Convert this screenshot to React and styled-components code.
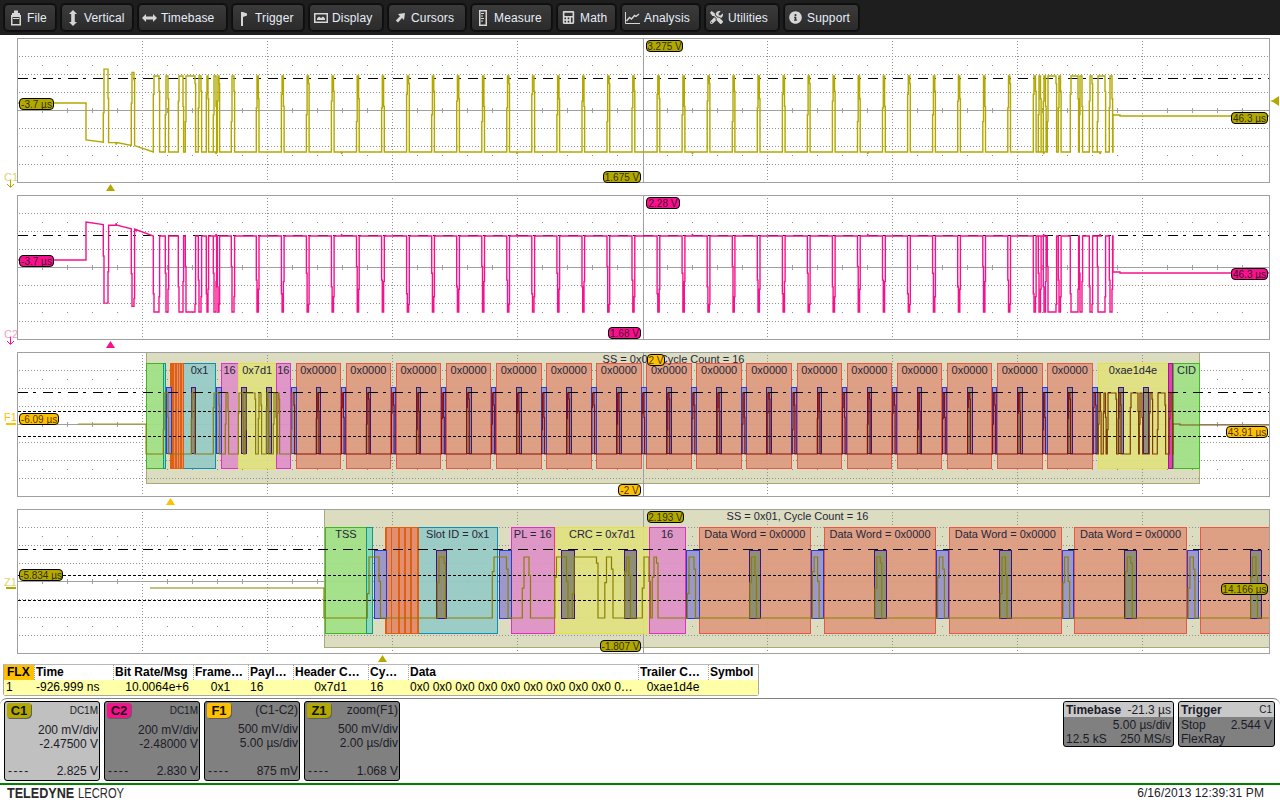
import React from 'react'
import styled, { createGlobalStyle } from 'styled-components'
import { FaCalculator, FaInfoCircle, FaTools } from 'react-icons/fa'

const GlobalStyle = createGlobalStyle`
  html, body {
    margin: 0;
    padding: 0;
    background: #fff;
  }
  body {
    font-family: "Liberation Sans", Arial, sans-serif;
  }
`

const Page = styled.div`
  width: 1280px;
  height: 800px;
  overflow: hidden;
  display: flex;
  flex-direction: column;
  background: #fff;
`

// top menu
const Toolbar = styled.div`
  height: 35px;
  flex: none;
  background: #1e1e1e;
  display: flex;
  align-items: flex-start;
  gap: 5px;
  padding: 4px 0 0 4px;
  box-sizing: border-box;
`
const MenuButton = styled.div`
  width: ${p => p.$w}px;
  height: 27px;
  flex: none;
  box-sizing: border-box;
  display: flex;
  align-items: center;
  padding-left: 3px;
  background: linear-gradient(#3b3b3b, #2b2b2b);
  border: 1px solid #0d0d0d;
  border-radius: 4px;
  box-shadow: 0 0 0 1px #111;
  color: #e6eefa;
  font-size: 12px;
  letter-spacing: 0.15px;
`
const MenuIcon = styled.span`
  width: 15px;
  height: 16px;
  margin-right: 4px;
  flex: none;
  display: flex;
  align-items: center;
  justify-content: center;
  color: #d6d6d6;
  font-size: 13px;
`

const Glyph = ({ children }) => (
  <svg width="14" height="16" viewBox="0 0 14 16" fill="#d6d6d6">{children}</svg>
)

const menu = [
  { label: 'File', w: 52, icon: <Glyph><rect x="3" y="3" width="8" height="2" /><rect x="5" y="0.5" width="4" height="3" /><path fillRule="evenodd" d="M2 5h10v10.5H2zM3.5 7v7h7V7z" /><rect x="4" y="8" width="6" height="1" /></Glyph> },
  { label: 'Vertical', w: 72, icon: <Glyph><path d="M7 0l4 4H8.8v8H11l-4 4-4-4h2.2V4H3z" /></Glyph> },
  { label: 'Timebase', w: 89, icon: <svg width="15" height="10" viewBox="0 0 15 10" fill="#d6d6d6"><path d="M0 5l4-4v2.6h7V1l4 4-4 4V6.4H4V9z" /></svg> },
  { label: 'Trigger', w: 72, icon: <Glyph><rect x="4" y="2" width="2" height="14" /><path d="M6 2l4 1.5v2L6 7z" /></Glyph> },
  { label: 'Display', w: 74, icon: <Glyph><path fillRule="evenodd" d="M0 3h14v10H0zM1.5 4.5v7h11v-7z" /><path d="M3 10V8.5l2-2 2 1.5 2-1.5 2 2V10z" /></Glyph> },
  { label: 'Cursors', w: 78, icon: <Glyph><path d="M12 3L11 10 9 8l-4 4.4L2.8 10.4 7 6.2 5 4z" /></Glyph> },
  { label: 'Measure', w: 81, icon: <Glyph><path fillRule="evenodd" d="M3 0h8v16H3zM4.5 1.5v13h5v-13z" /><path d="M5 3h3v1H5zM5 5.5h2v1H5zM5 8h3v1H5zM5 10.5h2v1H5z" /></Glyph> },
  { label: 'Math', w: 59, icon: <FaCalculator /> },
  { label: 'Analysis', w: 79, icon: <svg width="15" height="14" viewBox="0 0 15 14" fill="none" stroke="#d6d6d6"><path d="M0.5 1v11.5H15" /><path d="M1.5 10l3-3.5 2 1.5 3-3.5 1.5 1L14 3" strokeWidth="1.4" /></svg> },
  { label: 'Utilities', w: 74, icon: <FaTools /> },
  { label: 'Support', w: 75, icon: <FaInfoCircle /> },
]

// scope grids
const Grids = styled.div`
  display: flex;
  flex-direction: column;
  gap: 12px;
  padding: 3px 0 0 17px;
  flex: none;
`
const GridRow = styled.div`
  position: relative;
  width: 1253px;
  height: 145px;
  &::after {
    content: "";
    position: absolute;
    inset: 0;
    border: 1px solid #a0a0a0;
    pointer-events: none;
  }
`
const GridSvg = styled.svg`
  display: block;
  width: 1253px;
  height: 145px;
  overflow: hidden;
`
const Pill = styled.span`
  position: absolute;
  left: ${p => p.$x - 17}px;
  top: ${p => p.$y - p.$top}px;
  width: ${p => p.$w}px;
  height: 10px;
  display: flex;
  align-items: center;
  justify-content: center;
  background: ${p => p.$bg};
  border: 1px solid #000;
  border-radius: 4px;
  font-size: 10px;
  color: rgba(0, 0, 0, 0.75);
  white-space: nowrap;
  z-index: 2;
`
const TraceName = styled.span`
  position: absolute;
  left: -13px;
  top: ${p => p.$y}px;
  font-size: 11px;
  color: ${p => p.$color};
  line-height: 12px;
`
const NameMark = styled.svg`
  position: absolute;
  left: -11px;
  top: ${p => p.$y}px;
`
const Marker = styled.svg`
  position: absolute;
  left: ${p => p.$x - 17 - 4}px;
  top: 146px;
`
const LevelArrow = styled.svg`
  position: absolute;
  left: 1253px;
  top: 58px;
`

const early = [
  [104, 108], [132, 134], [154, 159], [166, 168], [179, 183], [186, 195],
  [199, 201], [207, 208], [214, 216], [218, 219], [232, 234],
]
const regular = Array.from({ length: 31 }, (_, i) => [257 + 25.05 * i, 258.4 + 25.05 * i])
const late = [
  [1034, 1035.5], [1039, 1040.5], [1044, 1045.5], [1048, 1056], [1059, 1060.5],
  [1071, 1078], [1080, 1082], [1090, 1092], [1098, 1105], [1110, 1112],
]
const pulses = [...early, ...regular, ...late]

const lerp = (a, b, t) => a + (b - a) * t
const fall = x => Math.min(1, Math.max(0, (x - 86) / 68))

// builds the d attribute for one trace, x values come in C1 time
function tracePath({ map, startX, pre, post, endX, base, peak, spikes }) {
  const pts = [[startX, pre], [map(86), pre], [map(86), base(86)]]
  pulses.forEach(([s, e], i) => {
    const b = base(s)
    const p = peak(s)
    const up = 0.4 + ((i * 7) % 5) * 0.09
    const down = 0.6 + ((i * 3) % 4) * 0.1
    pts.push([map(s - 0.7), b], [map(s - 0.7), lerp(b, p, up)], [map(s), lerp(b, p, up)], [map(s), p], [map(e), p])
    pts.push([map(e), lerp(b, p, down)], [map(e + 0.6), lerp(b, p, down)], [map(e + 0.6), base(e)])
    if (spikes && i % 7 === 0) {
      const sx = map(e + 8)
      pts.push([sx, base(e)], [sx, base(e) + 2 * (b < p ? -1 : 1)], [sx + 1, base(e)])
    }
  })
  pts.push([map(1113), base(1113)], [map(1113), post - 1], [map(1120), post - 1], [map(1120), post], [endX, post])
  return 'M' + pts.map(p => `${p[0].toFixed(1)} ${p[1].toFixed(1)}`).join('L')
}

const frames = [
  { f: 146.5, t: 163, fill: '#9fdf85', line: '#40b820', long: 'TSS' },
  { f: 163, t: 165.5, fill: '#7fd8b8', line: '#109a80' },
  { f: 183.5, t: 215.5, fill: '#95cac5', line: '#0c90b8', short: '0x1', long: 'Slot ID = 0x1' },
  { f: 221, t: 238, fill: '#dd90c8', line: '#e030c8', short: '16', long: 'PL = 16' },
  { f: 238.5, t: 276, fill: '#dfdf80', line: '#e4e040', short: '0x7d1', long: 'CRC = 0x7d1' },
  { f: 276, t: 290.5, fill: '#dd90c8', line: '#e030c8', short: '16', long: '16' },
  ...Array.from({ length: 16 }, (_, i) => ({
    f: 296 + 50.1 * i,
    t: 340.6 + 50.1 * i,
    fill: '#dd9a80',
    line: '#e85848',
    short: '0x0000',
    long: 'Data Word = 0x0000',
  })),
  { f: 1098, t: 1168, fill: '#dfdf80', line: '#e4e040', short: '0xae1d4e' },
  { f: 1168, t: 1172.5, fill: '#d838b0', line: '#b01090' },
  { f: 1173.5, t: 1199.5, fill: '#9fdf85', line: '#40b820', short: 'CID' },
]
const bars = [
  { f: 166, t: 171, blue: true },
  { f: 191, t: 195 },
  { f: 216, t: 221, blue: true },
  { f: 241, t: 246 },
  { f: 266, t: 271 },
  { f: 291, t: 296, blue: true },
  ...Array.from({ length: 16 }, (_, i) => ({ f: 316 + 50.1 * i, t: 320.7 + 50.1 * i })),
  ...Array.from({ length: 16 }, (_, i) => ({ f: 341 + 50.1 * i, t: 345.6 + 50.1 * i, blue: true })),
  { f: 1118, t: 1123 },
  { f: 1143, t: 1148 },
]
const orangeLines = [170.8, 173, 176, 178.4, 180.7, 183.5]

function Grid({ top }) {
  const verticals = Array.from({ length: 9 }, (_, i) => 142.5 + 125 * i).filter(x => x !== 642.5)
  const levels = [18, 36, 54, 90, 108, 126]
  const ticks = Array.from({ length: 49 }, (_, i) => 42 + 25 * i).filter(x => (x - 17) % 125 !== 0)
  return (
    <g shapeRendering="crispEdges">
      {verticals.map(x => <line key={x} x1={x} x2={x} y1={top} y2={top + 144} stroke="#909090" strokeDasharray="1 2" />)}
      {levels.map(y => <line key={y} x1={19} x2={1268} y1={top + y + 0.5} y2={top + y + 0.5} stroke="#909090" strokeDasharray="1 2" />)}
      {ticks.map(x => (
        <g key={x}>
          <rect x={x} y={top + 27} width="1" height="1" fill="#8c8c8c" />
          <rect x={x} y={top + 117} width="1" height="1" fill="#8c8c8c" />
          <rect x={x} y={top + 70} width="1" height="5" fill="#a0a0a0" />
        </g>
      ))}
      <line x1={17} x2={1270} y1={top + 72.5} y2={top + 72.5} stroke="#a0a0a0" />
      <line x1={643} x2={643} y1={top} y2={top + 145} stroke="#a0a0a0" />
    </g>
  )
}

const ThresholdLine = ({ y, dot }) => (
  <line x1={18} x2={1269} y1={y + 0.5} y2={y + 0.5} stroke="#000" strokeDasharray={dot ? '10 5 3 7' : '3 2'} shapeRendering="crispEdges" />
)

function Decode({ map, boxTop, boxBottom, barTop, barBottom, labelY, field }) {
  return (
    <g>
      <g shapeRendering="crispEdges">
        {frames.map(b => (
          <rect key={b.f} x={map(b.f)} y={boxTop} width={map(b.t) - map(b.f)} height={boxBottom - boxTop} fill={b.fill} fillOpacity="0.92" stroke={b.line} />
        ))}
        <rect x={map(170.8)} y={boxTop} width={map(183.5) - map(170.8)} height={boxBottom - boxTop} fill="#e09070" stroke="#e06010" />
        {orangeLines.map(x => <line key={x} x1={map(x)} x2={map(x)} y1={boxTop} y2={boxBottom} stroke="#e06010" strokeWidth="1.6" />)}
        {bars.map(b => (
          <rect key={b.f} x={map(b.f)} y={barTop} width={map(b.t) - map(b.f)} height={barBottom - barTop} fill={b.blue ? '#9c98cc' : '#8f8f78'} stroke={b.blue ? '#2c3cc8' : '#40108c'} />
        ))}
      </g>
      {frames.filter(b => b[field] && map(b.t) < 1270).map(b => (
        <text key={b.f} x={(map(b.f) + map(b.t)) / 2} y={labelY} textAnchor="middle" fontSize="11" fill="#26263a" fontFamily="Liberation Sans, Arial, sans-serif">{b[field]}</text>
      ))}
    </g>
  )
}

const fMap = c => c + 60
const zMap = c => 324 + (c - 86) * 2.5
const fIdentity = f => f
const zFromF = f => 324 + (f - 146) * 2.5

const C1_COLOR = '#b2a800'
const C2_COLOR = '#f5128c'
const F1_COLOR = '#ffc000'

const c1Path = tracePath({
  map: x => x, startX: 18, pre: 103, post: 116, endX: 1269, spikes: true,
  base: x => (x < 154 ? lerp(140, 148, fall(x)) : 152),
  peak: x => (x < 154 ? lerp(67, 75, fall(x)) : 76),
})
const c2Path = tracePath({
  map: x => x, startX: 18, pre: 260, post: 273, endX: 1269, spikes: true,
  base: x => (x < 154 ? lerp(222, 232, fall(x)) : 236),
  peak: x => (x < 154 ? lerp(301, 309, fall(x)) : 312),
})
const f1Path = tracePath({
  map: fMap, startX: 78, pre: 424, post: 425, endX: 1269,
  base: () => 454, peak: () => 393,
})
const z1Path = tracePath({
  map: zMap, startX: 150, pre: 588, post: 589, endX: 1269,
  base: () => 618, peak: () => 557,
})

// results table
const columns = '30px 79px 80px 55px 45px 75px 40px 230px 70px 51px'
const Table = styled.div`
  margin: 10px 0 0 3px;
  width: 756px;
  height: 32px;
  flex: none;
  box-sizing: border-box;
  border: 1px solid #a8a8a8;
  border-top-color: #b8b8b8;
  border-radius: 0 0 3px 3px;
  font-size: 12px;
  color: #000;
`
const TableRow = styled.div`
  display: grid;
  grid-template-columns: ${columns};
  height: 15px;
  line-height: 15px;
  background: ${p => (p.$head ? '#fff' : '#ffffa8')};
`
const HeadCell = styled.div`
  padding-left: 1px;
  border-left: ${p => (p.$first ? 'none' : '1px dotted #a0a0a0')};
  background: ${p => (p.$first ? '#ffc000' : 'transparent')};
  overflow: hidden;
  white-space: nowrap;
  font-weight: 700;
  text-indent: ${p => (p.$first ? 2 : 0)}px;
`
const ValueCell = styled.div`
  padding: 0 ${p => (p.$align === 'right' ? 4 : 2)}px 0 2px;
  text-align: ${p => p.$align || 'left'};
  white-space: nowrap;
  overflow: hidden;
`

// lower descriptor area
const Dock = styled.div`
  height: 85px;
  margin-top: 2px;
  flex: none;
  box-sizing: border-box;
  border-top: 1px solid #808080;
  border-radius: 7px 7px 0 0;
  padding: 2px 5px 0 4px;
  display: flex;
  align-items: flex-start;
  justify-content: space-between;
`
const ChannelGroup = styled.div`
  display: flex;
  gap: 4px;
`
const ChannelCard = styled.div`
  width: 96px;
  height: 80px;
  box-sizing: border-box;
  background: ${p => (p.$active ? '#c0c0c0' : '#808080')};
  border: 1px solid #000;
  border-radius: 3px;
  padding: 0 1px 2px 0;
  color: #1c1c28;
  font-size: 12px;
  line-height: 14px;
  display: flex;
  flex-direction: column;
  text-align: right;
`
const CardTop = styled.div`
  display: flex;
  justify-content: space-between;
  align-items: flex-start;
  height: 18px;
  padding-top: ${p => (p.$small ? 2 : 1)}px;
  margin-bottom: 1px;
  box-sizing: content-box;
  font-size: ${p => (p.$small ? 10 : 12)}px;
`
const ChannelTag = styled.span`
  width: 24px;
  height: 15px;
  margin: ${p => (p.$small ? -1 : 0)}px 0 0 2px;
  background: ${p => p.$color};
  border-radius: 2px 2px 5px 2px;
  box-shadow: 1px 1px 0 #606060;
  color: #111;
  font-size: 13px;
  font-weight: 700;
  line-height: 15px;
  text-align: center;
`
const CardFoot = styled.div`
  margin-top: auto;
  display: flex;
  justify-content: space-between;
  padding-left: 3px;
`
const Dashes = styled.span`
  letter-spacing: 1.4px;
`
const InfoGroup = styled.div`
  display: flex;
  gap: 4px;
`
const InfoCard = styled.div`
  width: ${p => p.$w}px;
  height: 46px;
  box-sizing: border-box;
  background: #808080;
  border: 1px solid #000;
  border-radius: 3px;
  overflow: hidden;
  color: #1c1c28;
  font-size: 12px;
  line-height: 14px;
`
const InfoHead = styled.div`
  display: flex;
  justify-content: space-between;
  align-items: center;
  height: 15px;
  padding: 0 2px;
  background: #c8c8c8;
  margin-bottom: 1px;
`
const InfoLine = styled.div`
  display: flex;
  justify-content: ${p => p.$left ? 'flex-start' : p.$right ? 'flex-end' : 'space-between'};
  padding: 0 2px;
`

// bottom strip
const Footer = styled.div`
  flex: none;
  height: 16px;
  border-top: 2px solid #008000;
  display: flex;
  justify-content: space-between;
  align-items: center;
  padding: 0 16px 0 7px;
`
const Logo = styled.div`
  display: flex;
  color: #2a2a2a;
  font-size: 14px;
  line-height: 14px;
  width: 118px;
`
const LogoWord = styled.span`
  display: block;
  flex: none;
  width: ${p => p.$w}px;
  transform: scaleX(${p => p.$scale});
  transform-origin: left center;
  font-weight: ${p => (p.$bold ? 700 : 400)};
`
const Stamp = styled.div`
  font-size: 12px;
  letter-spacing: 0.1px;
  color: #1c1c28;
`

const headers = ['FLX', 'Time', 'Bit Rate/Msg', 'Frame…', 'Payl…', 'Header C…', 'Cy…', 'Data', 'Trailer C…', 'Symbol']
const values = [
  { text: '1' },
  { text: '-926.999 ns' },
  { text: '10.0064e+6', align: 'right' },
  { text: '0x1', align: 'center' },
  { text: '16' },
  { text: '0x7d1', align: 'center' },
  { text: '16' },
  { text: '0x0 0x0 0x0 0x0 0x0 0x0 0x0 0x0 0x0 0…' },
  { text: '0xae1d4e', align: 'center' },
  { text: '' },
]
const channels = [
  { name: 'C1', color: C1_COLOR, top: 'DC1M', small: true, a: '200 mV/div', b: '-2.47500 V', c: '2.825 V', active: true },
  { name: 'C2', color: C2_COLOR, top: 'DC1M', small: true, a: '200 mV/div', b: '-2.48000 V', c: '2.830 V' },
  { name: 'F1', color: F1_COLOR, top: '(C1-C2)', a: '500 mV/div', b: '5.00 µs/div', c: '875 mV' },
  { name: 'Z1', color: C1_COLOR, top: 'zoom(F1)', a: '500 mV/div', b: '2.00 µs/div', c: '1.068 V' },
]

const Triangle = ({ x, color }) => (
  <Marker $x={x} width="9" height="7" viewBox="0 0 9 7"><path d="M4.5 0L9 7H0z" fill={color} /></Marker>
)

export default function App() {
  return (
    <Page>
      <GlobalStyle />
      <Toolbar>
        {menu.map(m => (
          <MenuButton key={m.label} $w={m.w}>
            <MenuIcon>{m.icon}</MenuIcon>
            {m.label}
          </MenuButton>
        ))}
      </Toolbar>

      <Grids>
        <GridRow>
          <GridSvg viewBox="17 38 1253 145">
            <Grid top={38} />
            <ThresholdLine y={78} dot />
            <path d={c1Path} fill="none" stroke={C1_COLOR} strokeWidth="1.4" />
          </GridSvg>
          <Pill $x={19} $y={98} $top={38} $w={33} $bg={C1_COLOR}>-3.7 µs</Pill>
          <Pill $x={646} $y={40} $top={38} $w={35} $bg={C1_COLOR}>3.275 V</Pill>
          <Pill $x={603} $y={171} $top={38} $w={36} $bg={C1_COLOR}>1.675 V</Pill>
          <Pill $x={1231} $y={112} $top={38} $w={35} $bg={C1_COLOR}>46.3 µs</Pill>
          <TraceName $y={133} $color="#dcd470">C1</TraceName>
          <NameMark $y={142} width="9" height="8" viewBox="0 0 9 8"><path d="M4.5 0v7M1 4l3.5 3.5L8 4" fill="none" stroke={C1_COLOR} strokeWidth="1" /></NameMark>
          <Triangle x={110} color={C1_COLOR} />
          <LevelArrow width="10" height="10" viewBox="0 0 10 10"><path d="M0 5l3-1 6-4v10l-6-4z" fill={C1_COLOR} /></LevelArrow>
        </GridRow>

        <GridRow>
          <GridSvg viewBox="17 195 1253 145">
            <Grid top={195} />
            <ThresholdLine y={235} dot />
            <path d={c2Path} fill="none" stroke={C2_COLOR} strokeWidth="1.4" />
          </GridSvg>
          <Pill $x={19} $y={255} $top={195} $w={33} $bg={C2_COLOR}>-3.7 µs</Pill>
          <Pill $x={646} $y={197} $top={195} $w={32} $bg={C2_COLOR}>2.28 V</Pill>
          <Pill $x={608} $y={327} $top={195} $w={31} $bg={C2_COLOR}>1.68 V</Pill>
          <Pill $x={1231} $y={268} $top={195} $w={35} $bg={C2_COLOR}>46.3 µs</Pill>
          <TraceName $y={133} $color="#f0a0c8">C2</TraceName>
          <NameMark $y={142} width="9" height="8" viewBox="0 0 9 8"><path d="M4.5 0v7M1 4l3.5 3.5L8 4" fill="none" stroke={C2_COLOR} strokeWidth="1" /></NameMark>
          <Triangle x={110} color={C2_COLOR} />
        </GridRow>

        <GridRow>
          <GridSvg viewBox="17 352 1253 145">
            <defs>
              <linearGradient id="f1Ink" gradientUnits="userSpaceOnUse" x1="17" x2="1270" y1="0" y2="0">
                <stop offset="0.103" stopColor="#a09820" />
                <stop offset="0.103" stopColor="#8a7a10" />
                <stop offset="0.22" stopColor="#8a7a10" />
                <stop offset="0.22" stopColor="#8a1008" />
                <stop offset="0.862" stopColor="#8a1008" />
                <stop offset="0.862" stopColor="#803c00" />
                <stop offset="0.923" stopColor="#803c00" />
                <stop offset="0.923" stopColor="#7a5a10" />
              </linearGradient>
            </defs>
            <rect x="146" y="352" width="1053.5" height="131.5" fill="#dcdcc0" stroke="#a8a878" shapeRendering="crispEdges" />
            <Grid top={352} />
            <Decode map={fIdentity} boxTop={363.5} boxBottom={468.5} barTop={387.5} barBottom={453.5} labelY={374} field="short" />
            <ThresholdLine y={392} dot />
            <ThresholdLine y={411} />
            <ThresholdLine y={436} />
            <path d={f1Path} fill="none" stroke="url(#f1Ink)" strokeWidth="1.2" />
            <text x={673.5} y={363} textAnchor="middle" fontSize="11" fill="#26263a" fontFamily="Liberation Sans, Arial, sans-serif">SS = 0x01, Cycle Count = 16</text>
          </GridSvg>
          <Pill $x={19} $y={413} $top={352} $w={38} $bg={F1_COLOR}>-6.09 µs</Pill>
          <Pill $x={647} $y={354} $top={352} $w={16} $bg={F1_COLOR}>2 V</Pill>
          <Pill $x={618} $y={484} $top={352} $w={21} $bg={F1_COLOR}>-2 V</Pill>
          <Pill $x={1226} $y={426} $top={352} $w={40} $bg={F1_COLOR}>43.91 µs</Pill>
          <TraceName $y={59} $color={F1_COLOR}>F1</TraceName>
          <NameMark $y={71} width="10" height="3" viewBox="0 0 10 3"><rect width="10" height="2" fill={F1_COLOR} /></NameMark>
          <Triangle x={170} color={F1_COLOR} />
        </GridRow>

        <GridRow>
          <GridSvg viewBox="17 509 1253 145">
            <rect x="324.5" y="509" width="960" height="138" fill="#dcdcc0" stroke="#a8a878" shapeRendering="crispEdges" />
            <Grid top={509} />
            <Decode map={zFromF} boxTop={527.5} boxBottom={633.5} barTop={550.5} barBottom={618.5} labelY={538} field="long" />
            <ThresholdLine y={549} dot />
            <ThresholdLine y={575} />
            <ThresholdLine y={600} />
            <path d={z1Path} fill="none" stroke="#8a8000" strokeWidth="1.2" />
            <text x={797.5} y={520} textAnchor="middle" fontSize="11" fill="#26263a" fontFamily="Liberation Sans, Arial, sans-serif">SS = 0x01, Cycle Count = 16</text>
          </GridSvg>
          <Pill $x={19} $y={569} $top={509} $w={42} $bg={C1_COLOR}>-5.834 µs</Pill>
          <Pill $x={647} $y={511} $top={509} $w={35} $bg={C1_COLOR}>2.193 V</Pill>
          <Pill $x={600} $y={640} $top={509} $w={39} $bg={C1_COLOR}>-1.807 V</Pill>
          <Pill $x={1221} $y={583} $top={509} $w={45} $bg={C1_COLOR}>14.166 µs</Pill>
          <TraceName $y={67} $color="#dcd470">Z1</TraceName>
          <NameMark $y={78} width="10" height="3" viewBox="0 0 10 3"><rect width="10" height="2" fill={C1_COLOR} /></NameMark>
          <Triangle x={382} color={C1_COLOR} />
        </GridRow>
      </Grids>

      <Table>
        <TableRow $head>
          {headers.map((h, i) => <HeadCell key={h} $first={i === 0}>{h}</HeadCell>)}
        </TableRow>
        <TableRow>
          {values.map((v, i) => <ValueCell key={i} $align={v.align}>{v.text}</ValueCell>)}
        </TableRow>
      </Table>

      <Dock>
        <ChannelGroup>
          {channels.map(c => (
            <ChannelCard key={c.name} $active={c.active}>
              <CardTop $small={c.small}>
                <ChannelTag $color={c.color} $small={c.small}>{c.name}</ChannelTag>
                {c.top}
              </CardTop>
              <div>{c.a}</div>
              <div>{c.b}</div>
              <CardFoot><Dashes>----</Dashes><span>{c.c}</span></CardFoot>
            </ChannelCard>
          ))}
        </ChannelGroup>
        <InfoGroup>
          <InfoCard $w={111}>
            <InfoHead><b>Timebase</b><span>-21.3 µs</span></InfoHead>
            <InfoLine $right>5.00 µs/div</InfoLine>
            <InfoLine><span>12.5 kS</span><span>250 MS/s</span></InfoLine>
          </InfoCard>
          <InfoCard $w={97}>
            <InfoHead><b>Trigger</b><small>C1</small></InfoHead>
            <InfoLine><span>Stop</span><span>2.544 V</span></InfoLine>
            <InfoLine $left>FlexRay</InfoLine>
          </InfoCard>
        </InfoGroup>
      </Dock>

      <Footer>
        <Logo>
          <LogoWord $bold $w={71} $scale={0.9}>TELEDYNE</LogoWord>
          <LogoWord $w={47} $scale={0.8}>LECROY</LogoWord>
        </Logo>
        <Stamp>6/16/2013 12:39:31 PM</Stamp>
      </Footer>
    </Page>
  )
}
